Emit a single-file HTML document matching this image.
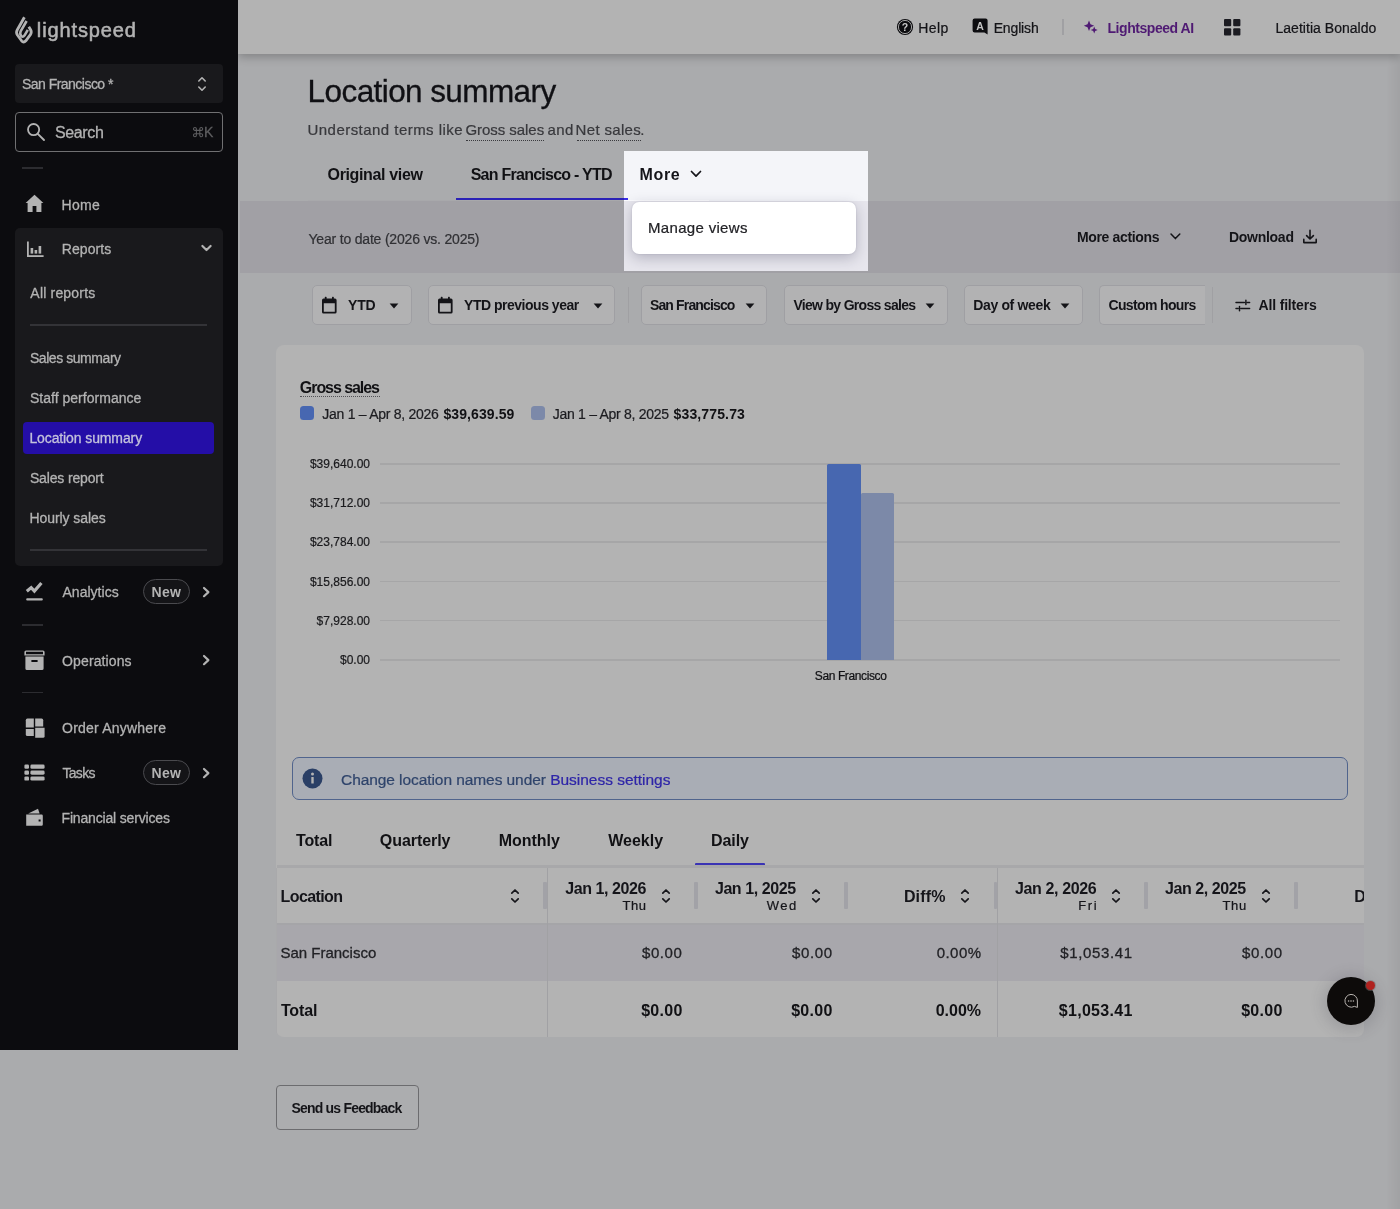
<!DOCTYPE html>
<html><head><meta charset="utf-8"><title>Location summary</title>
<style>
html,body{margin:0;padding:0}
body{width:1400px;height:1209px;background:#aaabad;position:relative;overflow:hidden;font-family:"Liberation Sans",sans-serif}
body div,body span,body svg{position:absolute;display:block}
span{white-space:pre}
svg{overflow:visible}
#w{left:0;top:0;width:1400px;height:1209px;will-change:transform}
</style></head><body><div id="w">
<div style="left:238px;top:0px;width:1162px;height:54px;background:#b3b3b3;box-shadow:0 3px 9px rgba(0,0,0,.24);z-index:2;clip-path:inset(0 0 -30px 0)"></div>
<div style="left:240px;top:201px;width:1160px;height:72px;background:#a1a0a5;"></div>
<div style="left:308px;top:200px;width:401px;height:1px;background:#a8a8ab;"></div>
<div style="left:456px;top:198px;width:172px;height:2px;background:#2b22b6;"></div>
<div style="left:624px;top:151px;width:244px;height:120px;background:#f4f5f9;overflow:hidden"><div style="left:0;top:50px;width:244px;height:70px;background:#e7e6ed"></div><div style="left:0;top:49px;width:85px;height:1px;background:#fcfcfe"></div><div style="left:0;top:47px;width:4px;height:2px;background:#3a2fe8"></div><div style="left:8px;top:51px;width:224px;height:52px;background:#fff;border-radius:7px;box-shadow:0 4px 14px rgba(30,30,60,.26),0 0 2px rgba(30,30,60,.14)"></div></div>
<svg style="left:690px;top:170px;" width="12" height="9" viewBox="0 0 12 9"><path d="M1.5 1.5 L6 6.2 L10.5 1.5" fill="none" stroke="#15151a" stroke-width="1.7" stroke-linecap="round" stroke-linejoin="round"/></svg>
<div style="left:0px;top:0px;width:238.3px;height:1050px;background:#0c0c0f;"></div>
<div style="left:14.6px;top:63.5px;width:208px;height:39.8px;background:#19191c;border-radius:4px"></div>
<div style="left:14.6px;top:111.5px;width:208px;height:40px;background:transparent;border-radius:4px;border:1px solid #707072;box-sizing:border-box"></div>
<div style="left:22px;top:167px;width:21px;height:2px;background:#2c2c30;"></div>
<div style="left:14.6px;top:228.4px;width:208px;height:337.6px;background:#19191c;border-radius:5px"></div>
<div style="left:30px;top:324px;width:177px;height:2px;background:#333337;"></div>
<div style="left:22.6px;top:421.5px;width:191.8px;height:32px;background:#240ea7;border-radius:4px"></div>
<div style="left:30px;top:549px;width:177px;height:2px;background:#333337;"></div>
<div style="left:22px;top:624px;width:21px;height:2px;background:#2c2c30;"></div>
<div style="left:22px;top:692px;width:21px;height:1px;background:#2c2c30;"></div>
<div style="left:143px;top:578.5px;width:47.4px;height:25.8px;background:transparent;border-radius:13px;border:1px solid #4a4a4e;box-sizing:border-box;background:#141417"></div>
<div style="left:143px;top:759.5px;width:47.4px;height:25.8px;background:transparent;border-radius:13px;border:1px solid #4a4a4e;box-sizing:border-box;background:#141417"></div>
<svg style="left:14px;top:15px;" width="20" height="30" viewBox="0 0 20 30"><g fill="none" stroke="#b3b3b3" stroke-linejoin="round" stroke-linecap="butt"><path stroke-width="2.8" d="M10.4 2.2 L3.2 15 Q1.8 17.6 3.4 20 L7.6 25.8 Q9.6 28.2 11.8 25.8 L16.4 19.6 Q18 17.2 16.6 14.8 L14.8 11.8"/><path stroke-width="2.6" d="M12.6 6 L6.6 16.4 Q5.6 18.6 7 20.6 Q8.8 22.8 10.4 20.6 L13.8 14.8"/></g></svg>
<svg style="left:197px;top:75px;" width="10" height="18" viewBox="0 0 10 18"><path d="M1.8 6 L5 2.8 L8.2 6 M1.8 12 L5 15.2 L8.2 12" fill="none" stroke="#b3b3b3" stroke-width="1.6" stroke-linecap="round" stroke-linejoin="round"/></svg>
<svg style="left:25px;top:121px;" width="22" height="22" viewBox="0 0 22 22"><circle cx="8.6" cy="8.6" r="5.6" fill="none" stroke="#b3b3b3" stroke-width="1.8"/><path d="M12.8 12.8 L19 19" stroke="#b3b3b3" stroke-width="1.9" stroke-linecap="round"/></svg>
<svg style="left:192.6px;top:126.8px;" width="10.2" height="10.2" viewBox="0 0 10.2 10.2"><path d="M3.4 6.8 V1.95 A1.45 1.45 0 1 0 1.95 3.4 H8.25 A1.45 1.45 0 1 0 6.8 1.95 V8.25 A1.45 1.45 0 1 0 8.25 6.8 H1.95 A1.45 1.45 0 1 0 3.4 8.25 Z" fill="none" stroke="#5e5e60" stroke-width="1.05"/></svg>
<svg style="left:25px;top:194px;" width="20" height="19" viewBox="0 0 20 19"><path d="M9.5 0.8 L0.6 9 L2.6 9 L2.6 17.9 L7.6 17.9 L7.6 12 L11.4 12 L11.4 17.9 L16.4 17.9 L16.4 9 L18.4 9 Z" fill="#b3b3b3"/></svg>
<svg style="left:26px;top:241px;" width="19" height="17" viewBox="0 0 19 17"><g fill="#b3b3b3"><rect x="1" y="0.5" width="1.8" height="15.5"/><rect x="1" y="14.2" width="16.6" height="1.8"/><rect x="4.6" y="7" width="2.6" height="5.6"/><rect x="8.6" y="9" width="2.6" height="3.6"/><rect x="12.6" y="5" width="2.6" height="7.6"/></g></svg>
<svg style="left:200px;top:243px;" width="13" height="11" viewBox="0 0 13 11"><path d="M2.4 3 L6.5 7 L10.6 3" fill="none" stroke="#b3b3b3" stroke-width="2.2" stroke-linecap="round" stroke-linejoin="round"/></svg>
<svg style="left:25px;top:581px;" width="20" height="21" viewBox="0 0 20 21"><path d="M1.8 10.2 L6.2 6.6 L9.4 10 L16.4 2" fill="none" stroke="#b3b3b3" stroke-width="3.2" stroke-linejoin="miter"/><rect x="1.2" y="17.2" width="16.6" height="2.2" rx="1" fill="#b3b3b3"/></svg>
<svg style="left:201px;top:584.5px;" width="11" height="14" viewBox="0 0 11 14"><path d="M3 3 L7.4 7.1 L3 11.2" fill="none" stroke="#b3b3b3" stroke-width="2.2" stroke-linecap="round" stroke-linejoin="round"/></svg>
<svg style="left:201px;top:653.2px;" width="11" height="14" viewBox="0 0 11 14"><path d="M3 3 L7.4 7.1 L3 11.2" fill="none" stroke="#b3b3b3" stroke-width="2.2" stroke-linecap="round" stroke-linejoin="round"/></svg>
<svg style="left:201px;top:765.6px;" width="11" height="14" viewBox="0 0 11 14"><path d="M3 3 L7.4 7.1 L3 11.2" fill="none" stroke="#b3b3b3" stroke-width="2.2" stroke-linecap="round" stroke-linejoin="round"/></svg>
<svg style="left:24px;top:650px;" width="21" height="21" viewBox="0 0 21 21"><g fill="#b3b3b3"><path d="M2 0.4 H19 Q20.6 0.4 20.6 2 V5.6 H0.4 V2 Q0.4 0.4 2 0.4 Z M2 1.8 V4.2 H19 V1.8 Z" fill-rule="evenodd"/><path d="M1.4 6.4 H19.6 V18.4 Q19.6 20 18 20 H3 Q1.4 20 1.4 18.4 Z M7.4 10 V12 H13.6 V10 Z" fill-rule="evenodd"/></g></svg>
<svg style="left:25px;top:718px;" width="21" height="21" viewBox="0 0 21 21"><g fill="#b3b3b3"><path d="M2.4 0.6 H8.8 V9.6 H0.8 V2.2 Q0.8 0.6 2.4 0.6Z"/><path d="M10.2 0.6 H16.6 Q18.2 0.6 18.2 2.2 V8.4 H10.2Z"/><path d="M0.8 11 H8.8 V18 H2.4 Q0.8 18 0.8 16.4Z"/><path d="M10.2 9.8 H19.6 V18.2 Q19.6 19.8 18 19.8 H10.2Z"/></g></svg>
<svg style="left:24px;top:764px;" width="21" height="18" viewBox="0 0 21 18"><g fill="#b3b3b3"><rect x="0.4" y="0.6" width="4.6" height="4.2" rx="1.2"/><rect x="6.4" y="0.6" width="14.2" height="4.2" rx="1.4"/><rect x="0.4" y="6.5" width="4.6" height="4.2" rx="1.2"/><rect x="6.4" y="6.5" width="14.2" height="4.2" rx="1.4"/><rect x="0.4" y="12.4" width="4.6" height="4.2" rx="1.2"/><rect x="6.4" y="12.4" width="14.2" height="4.2" rx="1.4"/></g></svg>
<svg style="left:25px;top:808px;" width="19" height="19" viewBox="0 0 19 19"><g fill="#b3b3b3"><path d="M3.2 5.4 L13 0.8 L14.6 5.4 Z"/><path d="M1.2 6.6 H16.6 Q17.8 6.6 17.8 7.8 V16.6 Q17.8 17.8 16.6 17.8 H1.2 Z M13.6 11.4 V13.4 H15.6 V11.4 Z" fill-rule="evenodd"/></g></svg>
<svg style="left:896px;top:18px;z-index:3" width="18" height="18" viewBox="0 0 18 18"><circle cx="9" cy="9" r="8.1" fill="#0d0d10"/><circle cx="9" cy="9" r="6.6" fill="none" stroke="#b3b3b3" stroke-width="0.9"/><text x="9" y="12.9" text-anchor="middle" font-family="Liberation Sans" font-weight="700" font-size="10.5" fill="#c9c9c9">?</text></svg>
<svg style="left:972px;top:18px;z-index:3" width="17" height="18" viewBox="0 0 17 18"><path d="M2.6 0.6 H13.6 Q15.6 0.6 15.6 2.6 V16.6 L12.4 14.4 H2.6 Q0.6 14.4 0.6 12.4 V2.6 Q0.6 0.6 2.6 0.6Z" fill="#0d0d10"/><text x="8.1" y="11.6" text-anchor="middle" font-family="Liberation Sans" font-weight="700" font-size="10.5" fill="#c4c4c4">A</text></svg>
<div style="left:1062px;top:19px;width:2px;height:16px;background:#a0a0a3;z-index:3"></div>
<svg style="left:1084px;top:20px;z-index:3" width="14" height="14" viewBox="0 0 14 14"><g fill="#4f1a73"><path d="M5 0.6 L6.5 4.3 L10.2 5.8 L6.5 7.3 L5 11 L3.5 7.3 L-0.2 5.8 L3.5 4.3Z"/><path d="M10.2 6.6 L11.2 9.1 L13.7 10.1 L11.2 11.1 L10.2 13.6 L9.2 11.1 L6.7 10.1 L9.2 9.1Z"/></g></svg>
<svg style="left:1224px;top:19px;z-index:3" width="17" height="17" viewBox="0 0 17 17"><g fill="#1b1b21"><rect x="0" y="0" width="7.2" height="7.2" rx="1"/><rect x="9.2" y="0" width="7.2" height="7.2" rx="1"/><rect x="0" y="9.2" width="7.2" height="7.2" rx="1"/><rect x="9.2" y="9.2" width="7.2" height="7.2" rx="1"/></g></svg>
<div style="left:466px;top:140px;width:78px;height:0px;background:transparent;border-top:1px dotted #3a3a3e"></div>
<div style="left:577px;top:140px;width:64px;height:0px;background:transparent;border-top:1px dotted #3a3a3e"></div>
<svg style="left:1169px;top:232px;" width="13" height="10" viewBox="0 0 13 10"><path d="M2 2 L6.4 6.6 L10.8 2" fill="none" stroke="#141418" stroke-width="1.5" stroke-linecap="round" stroke-linejoin="round"/></svg>
<svg style="left:1302px;top:229px;" width="16" height="16" viewBox="0 0 16 16"><g fill="none" stroke="#141418" stroke-width="1.6" stroke-linecap="round" stroke-linejoin="round"><path d="M8 1.4 V9.6 M4.6 6.6 L8 10 L11.4 6.6"/><path d="M1.8 10.4 V13.6 H14.2 V10.4"/></g></svg>
<div style="left:312px;top:285px;width:100px;height:40px;background:#b2b2b3;border:1px solid #9f9fa3;box-sizing:border-box;border-radius:5px;"></div>
<div style="left:428px;top:285px;width:187px;height:40px;background:#b2b2b3;border:1px solid #9f9fa3;box-sizing:border-box;border-radius:5px;"></div>
<div style="left:641px;top:285px;width:126px;height:40px;background:#b2b2b3;border:1px solid #9f9fa3;box-sizing:border-box;border-radius:5px;"></div>
<div style="left:784px;top:285px;width:164px;height:40px;background:#b2b2b3;border:1px solid #9f9fa3;box-sizing:border-box;border-radius:5px;"></div>
<div style="left:964px;top:285px;width:119px;height:40px;background:#b2b2b3;border:1px solid #9f9fa3;box-sizing:border-box;border-radius:5px;"></div>
<div style="left:1099px;top:285px;width:105.5px;height:40px;background:#b2b2b3;border:1px solid #9f9fa3;border-right:none;box-sizing:border-box;border-radius:5px 0 0 5px;"></div>
<div style="left:627.5px;top:287px;width:1px;height:36px;background:#a0a0a3;"></div>
<div style="left:1212px;top:287px;width:1px;height:36px;background:#a0a0a3;"></div>
<svg style="left:321px;top:295.6px;" width="17" height="19" viewBox="0 0 17 19"><g fill="#141418"><path d="M2.6 2.6 H14 Q15.6 2.6 15.6 4.2 V16 Q15.6 17.6 14 17.6 H2.6 Q1 17.6 1 16 V4.2 Q1 2.6 2.6 2.6Z M2.8 7.2 V15.8 H13.8 V7.2Z" fill-rule="evenodd"/><rect x="3.8" y="0.8" width="1.8" height="3.4" rx=".6"/><rect x="11" y="0.8" width="1.8" height="3.4" rx=".6"/></g></svg>
<svg style="left:437.2px;top:295.6px;" width="17" height="19" viewBox="0 0 17 19"><g fill="#141418"><path d="M2.6 2.6 H14 Q15.6 2.6 15.6 4.2 V16 Q15.6 17.6 14 17.6 H2.6 Q1 17.6 1 16 V4.2 Q1 2.6 2.6 2.6Z M2.8 7.2 V15.8 H13.8 V7.2Z" fill-rule="evenodd"/><rect x="3.8" y="0.8" width="1.8" height="3.4" rx=".6"/><rect x="11" y="0.8" width="1.8" height="3.4" rx=".6"/></g></svg>
<svg style="left:389.2px;top:302.5px;" width="10" height="6" viewBox="0 0 10 6"><path d="M0.6 0.6 H9.4 L5 5.4Z" fill="#141418"/></svg>
<svg style="left:592.6px;top:302.5px;" width="10" height="6" viewBox="0 0 10 6"><path d="M0.6 0.6 H9.4 L5 5.4Z" fill="#141418"/></svg>
<svg style="left:744.8px;top:302.5px;" width="10" height="6" viewBox="0 0 10 6"><path d="M0.6 0.6 H9.4 L5 5.4Z" fill="#141418"/></svg>
<svg style="left:925.2px;top:302.5px;" width="10" height="6" viewBox="0 0 10 6"><path d="M0.6 0.6 H9.4 L5 5.4Z" fill="#141418"/></svg>
<svg style="left:1060.2px;top:302.5px;" width="10" height="6" viewBox="0 0 10 6"><path d="M0.6 0.6 H9.4 L5 5.4Z" fill="#141418"/></svg>
<svg style="left:1235px;top:299px;" width="16" height="13" viewBox="0 0 16 13"><g stroke="#141418" stroke-width="1.5" fill="none" stroke-linecap="round"><path d="M1 3.4 H9.4 M12.4 3.4 H14.6 M10.9 1.2 V5.6"/><path d="M1 9.6 H3 M6 9.6 H14.6 M4.5 7.4 V11.8"/></g></svg>
<div style="left:276px;top:345px;width:1088px;height:692px;background:#b3b3b3;border-radius:8px"></div>
<div style="left:300px;top:396px;width:80px;height:0px;background:transparent;border-top:1px dotted #505055"></div>
<div style="left:300px;top:406px;width:14px;height:14px;background:#4767b1;border-radius:3.5px"></div>
<div style="left:530.5px;top:406px;width:14px;height:14px;background:#7c89a9;border-radius:3.5px"></div>
<div style="left:380px;top:463.0px;width:960px;height:1.6px;background:#a6a6a7;"></div>
<span style="left:290px;width:80px;text-align:right;top:458.0px;font-size:12px;line-height:12px;color:#1a1a1d;-webkit-text-stroke:0.2px #1a1a1d">$39,640.00</span>
<div style="left:380px;top:502.2px;width:960px;height:1.6px;background:#a6a6a7;"></div>
<span style="left:290px;width:80px;text-align:right;top:497.2px;font-size:12px;line-height:12px;color:#1a1a1d;-webkit-text-stroke:0.2px #1a1a1d">$31,712.00</span>
<div style="left:380px;top:541.4px;width:960px;height:1.6px;background:#a6a6a7;"></div>
<span style="left:290px;width:80px;text-align:right;top:536.4px;font-size:12px;line-height:12px;color:#1a1a1d;-webkit-text-stroke:0.2px #1a1a1d">$23,784.00</span>
<div style="left:380px;top:580.6px;width:960px;height:1.6px;background:#a6a6a7;"></div>
<span style="left:290px;width:80px;text-align:right;top:575.6px;font-size:12px;line-height:12px;color:#1a1a1d;-webkit-text-stroke:0.2px #1a1a1d">$15,856.00</span>
<div style="left:380px;top:619.8px;width:960px;height:1.6px;background:#a6a6a7;"></div>
<span style="left:290px;width:80px;text-align:right;top:614.8px;font-size:12px;line-height:12px;color:#1a1a1d;-webkit-text-stroke:0.2px #1a1a1d">$7,928.00</span>
<div style="left:380px;top:659.0px;width:960px;height:1.6px;background:#a6a6a7;"></div>
<span style="left:290px;width:80px;text-align:right;top:654.0px;font-size:12px;line-height:12px;color:#1a1a1d;-webkit-text-stroke:0.2px #1a1a1d">$0.00</span>
<div style="left:827px;top:464px;width:33.5px;height:195.5px;background:#4767b0;border-radius:1.5px 1.5px 0 0"></div>
<div style="left:860.5px;top:493px;width:33.5px;height:166.5px;background:#7c89a8;border-radius:1.5px 1.5px 0 0"></div>
<div style="left:292px;top:757px;width:1056px;height:42.6px;background:#a9adb5;border:1px solid #50648d;box-sizing:border-box;border-radius:7px"></div>
<svg style="left:302.2px;top:767.8px;" width="21" height="21" viewBox="0 0 21 21"><circle cx="10.5" cy="10.5" r="10" fill="#2a3f66"/><rect x="9.3" y="9" width="2.4" height="6.6" rx=".4" fill="#b3b3b3"/><circle cx="10.5" cy="5.9" r="1.5" fill="#b3b3b3"/></svg>
<div style="left:695.4px;top:863px;width:69.4px;height:2.6px;background:#3a33b4;border-radius:1px"></div>
<div style="left:277px;top:865.4px;width:1087px;height:2.2px;background:#a8a8aa;"></div>
<div style="left:277px;top:923px;width:1087px;height:2.4px;background:#a5a5a8;"></div>
<div style="left:277px;top:925px;width:1087px;height:56px;background:#a8a7ac;"></div>
<div style="left:276px;top:868px;width:1px;height:165px;background:#a9a9ab;"></div>
<div style="left:547px;top:868px;width:1px;height:169px;background:#a1a1a4;"></div>
<div style="left:997px;top:868px;width:1px;height:169px;background:#a1a1a4;"></div>
<div style="left:543.3px;top:881.8px;width:3.5px;height:27px;background:#a2a2a7;border-radius:1px"></div>
<div style="left:694px;top:881.8px;width:3.5px;height:27px;background:#a2a2a7;border-radius:1px"></div>
<div style="left:844.3px;top:881.8px;width:3.5px;height:27px;background:#a2a2a7;border-radius:1px"></div>
<div style="left:993.6px;top:881.8px;width:3.5px;height:27px;background:#a2a2a7;border-radius:1px"></div>
<div style="left:1144.3px;top:881.8px;width:3.5px;height:27px;background:#a2a2a7;border-radius:1px"></div>
<div style="left:1294.3px;top:881.8px;width:3.5px;height:27px;background:#a2a2a7;border-radius:1px"></div>
<svg style="left:510px;top:886.5px;" width="10" height="18" viewBox="0 0 10 18"><path d="M1.8 6.2 L5 3 L8.2 6.2 M1.8 11.8 L5 15 L8.2 11.8" fill="none" stroke="#15151a" stroke-width="1.7" stroke-linecap="round" stroke-linejoin="round"/></svg>
<svg style="left:661px;top:886.5px;" width="10" height="18" viewBox="0 0 10 18"><path d="M1.8 6.2 L5 3 L8.2 6.2 M1.8 11.8 L5 15 L8.2 11.8" fill="none" stroke="#15151a" stroke-width="1.7" stroke-linecap="round" stroke-linejoin="round"/></svg>
<svg style="left:810.7px;top:886.5px;" width="10" height="18" viewBox="0 0 10 18"><path d="M1.8 6.2 L5 3 L8.2 6.2 M1.8 11.8 L5 15 L8.2 11.8" fill="none" stroke="#15151a" stroke-width="1.7" stroke-linecap="round" stroke-linejoin="round"/></svg>
<svg style="left:959.5px;top:886.5px;" width="10" height="18" viewBox="0 0 10 18"><path d="M1.8 6.2 L5 3 L8.2 6.2 M1.8 11.8 L5 15 L8.2 11.8" fill="none" stroke="#15151a" stroke-width="1.7" stroke-linecap="round" stroke-linejoin="round"/></svg>
<svg style="left:1110.7px;top:886.5px;" width="10" height="18" viewBox="0 0 10 18"><path d="M1.8 6.2 L5 3 L8.2 6.2 M1.8 11.8 L5 15 L8.2 11.8" fill="none" stroke="#15151a" stroke-width="1.7" stroke-linecap="round" stroke-linejoin="round"/></svg>
<svg style="left:1261px;top:886.5px;" width="10" height="18" viewBox="0 0 10 18"><path d="M1.8 6.2 L5 3 L8.2 6.2 M1.8 11.8 L5 15 L8.2 11.8" fill="none" stroke="#15151a" stroke-width="1.7" stroke-linecap="round" stroke-linejoin="round"/></svg>
<div style="left:276px;top:1085px;width:142.5px;height:45px;background:#acadaf;border:1px solid #6c6c6f;box-sizing:border-box;border-radius:4px"></div>
<div style="left:1327px;top:977px;width:48px;height:48px;border-radius:50%;background:#0d0b0a;box-shadow:0 2px 14px 4px rgba(60,60,70,.18)"></div>
<svg style="left:1343px;top:993px;" width="16" height="16" viewBox="0 0 16 16"><path d="M8 1.4 A6.4 6.4 0 1 0 11.4 13.4 L14.4 14.4 L14.4 8 A6.4 6.4 0 0 0 8 1.4Z" fill="none" stroke="#b8b4b0" stroke-width="1"/><g fill="#b8b4b0"><circle cx="5.6" cy="8" r=".8"/><circle cx="8" cy="8" r=".8"/><circle cx="10.4" cy="8" r=".8"/></g></svg>
<div style="left:1366.4px;top:981.3px;width:9px;height:9px;background:#b0221f;border-radius:50%;box-shadow:0 0 0 1px rgba(120,110,110,.5)"></div>
<div style="left:1386px;top:54px;width:14px;height:1155px;background:linear-gradient(90deg,rgba(0,0,0,0),rgba(0,0,0,.055));"></div>
<span style="left:36.87px;top:20px;font-size:20px;line-height:20px;font-weight:400;letter-spacing:0.869px;color:#b3b3b3;-webkit-text-stroke:0.55px #b3b3b3">lightspeed</span>
<span style="left:21.98px;top:77px;font-size:14px;line-height:14px;font-weight:400;letter-spacing:-0.525px;color:#b3b3b3;-webkit-text-stroke:0.3px #b3b3b3">San Francisco *</span>
<span style="left:54.96px;top:125px;font-size:16px;line-height:16px;font-weight:400;letter-spacing:-0.363px;color:#b3b3b3;-webkit-text-stroke:0.3px #b3b3b3">Search</span>
<span style="left:203.92px;top:125px;font-size:14px;line-height:14px;font-weight:400;letter-spacing:0px;color:#5e5e60;-webkit-text-stroke:0.3px #5e5e60">K</span>
<span style="left:61.51px;top:198px;font-size:14px;line-height:14px;font-weight:400;letter-spacing:0.273px;color:#b3b3b3;-webkit-text-stroke:0.3px #b3b3b3">Home</span>
<span style="left:61.81px;top:242px;font-size:14px;line-height:14px;font-weight:400;letter-spacing:0.081px;color:#b3b3b3;-webkit-text-stroke:0.3px #b3b3b3">Reports</span>
<span style="left:30.36px;top:286px;font-size:14px;line-height:14px;font-weight:400;letter-spacing:0.183px;color:#b3b3b3;-webkit-text-stroke:0.3px #b3b3b3">All reports</span>
<span style="left:29.88px;top:351px;font-size:14px;line-height:14px;font-weight:400;letter-spacing:-0.436px;color:#b3b3b3;-webkit-text-stroke:0.3px #b3b3b3">Sales summary</span>
<span style="left:29.88px;top:391px;font-size:14px;line-height:14px;font-weight:400;letter-spacing:0.026px;color:#b3b3b3;-webkit-text-stroke:0.3px #b3b3b3">Staff performance</span>
<span style="left:29.41px;top:431px;font-size:14px;line-height:14px;font-weight:400;letter-spacing:-0.11px;color:#c4c2dc;-webkit-text-stroke:0.3px #c4c2dc">Location summary</span>
<span style="left:29.88px;top:471px;font-size:14px;line-height:14px;font-weight:400;letter-spacing:-0.151px;color:#b3b3b3;-webkit-text-stroke:0.3px #b3b3b3">Sales report</span>
<span style="left:29.41px;top:511px;font-size:14px;line-height:14px;font-weight:400;letter-spacing:-0.056px;color:#b3b3b3;-webkit-text-stroke:0.3px #b3b3b3">Hourly sales</span>
<span style="left:62.46px;top:585px;font-size:14px;line-height:14px;font-weight:400;letter-spacing:0.029px;color:#b3b3b3;-webkit-text-stroke:0.3px #b3b3b3">Analytics</span>
<span style="left:151.60px;top:585px;font-size:14px;line-height:14px;font-weight:700;letter-spacing:0.262px;color:#b3b3b3">New</span>
<span style="left:62.09px;top:654px;font-size:14px;line-height:14px;font-weight:400;letter-spacing:0.117px;color:#b3b3b3;-webkit-text-stroke:0.3px #b3b3b3">Operations</span>
<span style="left:62.09px;top:721px;font-size:14px;line-height:14px;font-weight:400;letter-spacing:0.208px;color:#b3b3b3;-webkit-text-stroke:0.3px #b3b3b3">Order Anywhere</span>
<span style="left:62.41px;top:766px;font-size:14px;line-height:14px;font-weight:400;letter-spacing:-0.682px;color:#b3b3b3;-webkit-text-stroke:0.3px #b3b3b3">Tasks</span>
<span style="left:151.60px;top:766px;font-size:14px;line-height:14px;font-weight:700;letter-spacing:0.262px;color:#b3b3b3">New</span>
<span style="left:61.51px;top:811px;font-size:14px;line-height:14px;font-weight:400;letter-spacing:-0.169px;color:#b3b3b3;-webkit-text-stroke:0.3px #b3b3b3">Financial services</span>
<span style="left:918.36px;top:21px;font-size:14px;line-height:14px;font-weight:400;letter-spacing:0.392px;color:#141418;z-index:3;-webkit-text-stroke:0.22px #141418">Help</span>
<span style="left:993.66px;top:21px;font-size:14px;line-height:14px;font-weight:400;letter-spacing:-0.147px;color:#141418;z-index:3;-webkit-text-stroke:0.22px #141418">English</span>
<span style="left:1107.50px;top:21px;font-size:14px;line-height:14px;font-weight:700;letter-spacing:-0.45px;color:#4f1a73;z-index:3">Lightspeed AI</span>
<span style="left:1275.46px;top:21px;font-size:14px;line-height:14px;font-weight:400;letter-spacing:0.031px;color:#141418;z-index:3;-webkit-text-stroke:0.22px #141418">Laetitia Bonaldo</span>
<span style="left:307.62px;top:76px;font-size:31.5px;line-height:31.5px;font-weight:400;letter-spacing:-0.586px;color:#101014;-webkit-text-stroke:0.3px #101014">Location summary</span>
<span style="left:307.52px;top:122px;font-size:15px;line-height:15px;font-weight:400;letter-spacing:0.458px;color:#38383c;-webkit-text-stroke:0.22px #38383c">Understand terms like</span>
<span style="left:465.39px;top:122px;font-size:15px;line-height:15px;font-weight:400;letter-spacing:-0.04px;color:#38383c;-webkit-text-stroke:0.22px #38383c">Gross sales</span>
<span style="left:547.45px;top:122px;font-size:15px;line-height:15px;font-weight:400;letter-spacing:0.389px;color:#38383c;-webkit-text-stroke:0.22px #38383c">and</span>
<span style="left:575.52px;top:122px;font-size:15px;line-height:15px;font-weight:400;letter-spacing:0.346px;color:#38383c;-webkit-text-stroke:0.22px #38383c">Net sales</span>
<span style="left:640.34px;top:122px;font-size:15px;line-height:15px;font-weight:400;letter-spacing:0px;color:#38383c;-webkit-text-stroke:0.22px #38383c">.</span>
<span style="left:327.57px;top:167px;font-size:16px;line-height:16px;font-weight:700;letter-spacing:-0.356px;color:#111114">Original view</span>
<span style="left:470.65px;top:167px;font-size:16px;line-height:16px;font-weight:700;letter-spacing:-0.741px;color:#111114">San Francisco - YTD</span>
<span style="left:639.61px;top:167px;font-size:16px;line-height:16px;font-weight:700;letter-spacing:0.595px;color:#15151a">More</span>
<span style="left:648.00px;top:220px;font-size:15px;line-height:15px;font-weight:400;letter-spacing:0.324px;color:#222226;-webkit-text-stroke:0.22px #222226">Manage views</span>
<span style="left:308.48px;top:232px;font-size:14px;line-height:14px;font-weight:400;letter-spacing:-0.189px;color:#303034;-webkit-text-stroke:0.22px #303034">Year to date (2026 vs. 2025)</span>
<span style="left:1076.90px;top:230px;font-size:14px;line-height:14px;font-weight:700;letter-spacing:-0.333px;color:#141418">More actions</span>
<span style="left:1228.90px;top:230px;font-size:14px;line-height:14px;font-weight:700;letter-spacing:-0.261px;color:#141418">Download</span>
<span style="left:347.97px;top:298px;font-size:14px;line-height:14px;font-weight:700;letter-spacing:-0.163px;color:#141418">YTD</span>
<span style="left:464.07px;top:298px;font-size:14px;line-height:14px;font-weight:700;letter-spacing:-0.489px;color:#141418">YTD previous year</span>
<span style="left:649.95px;top:298px;font-size:14px;line-height:14px;font-weight:700;letter-spacing:-0.852px;color:#141418">San Francisco</span>
<span style="left:793.41px;top:298px;font-size:14px;line-height:14px;font-weight:700;letter-spacing:-0.691px;color:#141418">View by Gross sales</span>
<span style="left:973.20px;top:298px;font-size:14px;line-height:14px;font-weight:700;letter-spacing:-0.344px;color:#141418">Day of week</span>
<span style="left:1108.45px;top:298px;font-size:14px;line-height:14px;font-weight:700;letter-spacing:-0.63px;color:#141418">Custom hours</span>
<span style="left:1258.57px;top:298px;font-size:14px;line-height:14px;font-weight:700;letter-spacing:-0.175px;color:#141418">All filters</span>
<span style="left:299.87px;top:380px;font-size:16px;line-height:16px;font-weight:700;letter-spacing:-1.067px;color:#111114">Gross sales</span>
<span style="left:322.30px;top:407px;font-size:14px;line-height:14px;font-weight:400;letter-spacing:-0.275px;color:#1c1c20;-webkit-text-stroke:0.22px #1c1c20">Jan 1 – Apr 8, 2026</span>
<span style="left:443.40px;top:407px;font-size:14px;line-height:14px;font-weight:700;letter-spacing:0.093px;color:#111114">$39,639.59</span>
<span style="left:552.80px;top:407px;font-size:14px;line-height:14px;font-weight:400;letter-spacing:-0.284px;color:#1c1c20;-webkit-text-stroke:0.22px #1c1c20">Jan 1 – Apr 8, 2025</span>
<span style="left:673.60px;top:407px;font-size:14px;line-height:14px;font-weight:700;letter-spacing:0.131px;color:#111114">$33,775.73</span>
<span style="left:814.77px;top:670px;font-size:12px;line-height:12px;font-weight:400;letter-spacing:-0.385px;color:#111114;-webkit-text-stroke:0.22px #111114">San Francisco</span>
<span style="left:341.05px;top:772px;font-size:15.5px;line-height:15.5px;font-weight:400;letter-spacing:-0.076px;color:#2f446b;-webkit-text-stroke:0.22px #2f446b">Change location names under</span>
<span style="left:550.18px;top:772px;font-size:15.5px;line-height:15.5px;font-weight:400;letter-spacing:-0.023px;color:#2e25a8;-webkit-text-stroke:0.22px #2e25a8">Business settings</span>
<span style="left:296.09px;top:833px;font-size:16px;line-height:16px;font-weight:700;letter-spacing:-0.195px;color:#111114">Total</span>
<span style="left:379.87px;top:833px;font-size:16px;line-height:16px;font-weight:700;letter-spacing:-0.067px;color:#111114">Quarterly</span>
<span style="left:498.71px;top:833px;font-size:16px;line-height:16px;font-weight:700;letter-spacing:-0.023px;color:#111114">Monthly</span>
<span style="left:608.14px;top:833px;font-size:16px;line-height:16px;font-weight:700;letter-spacing:0.029px;color:#111114">Weekly</span>
<span style="left:711.01px;top:833px;font-size:16px;line-height:16px;font-weight:700;letter-spacing:-0.069px;color:#111114">Daily</span>
<span style="left:280.61px;top:889px;font-size:16px;line-height:16px;font-weight:700;letter-spacing:-0.624px;color:#15151a">Location</span>
<span style="left:565.21px;top:881px;font-size:16px;line-height:16px;font-weight:700;letter-spacing:-0.424px;color:#15151a">Jan 1, 2026</span>
<span style="left:622.40px;top:899px;font-size:13px;line-height:13px;font-weight:400;letter-spacing:0.623px;color:#15151a;-webkit-text-stroke:0.22px #15151a">Thu</span>
<span style="left:714.91px;top:881px;font-size:16px;line-height:16px;font-weight:700;letter-spacing:-0.426px;color:#15151a">Jan 1, 2025</span>
<span style="left:766.64px;top:899px;font-size:13px;line-height:13px;font-weight:400;letter-spacing:1.504px;color:#15151a;-webkit-text-stroke:0.22px #15151a">Wed</span>
<span style="left:903.91px;top:889px;font-size:16px;line-height:16px;font-weight:700;letter-spacing:0.143px;color:#15151a">Diff%</span>
<span style="left:1014.91px;top:881px;font-size:16px;line-height:16px;font-weight:700;letter-spacing:-0.364px;color:#15151a">Jan 2, 2026</span>
<span style="left:1078.23px;top:899px;font-size:13px;line-height:13px;font-weight:400;letter-spacing:1.642px;color:#15151a;-webkit-text-stroke:0.22px #15151a">Fri</span>
<span style="left:1164.91px;top:881px;font-size:16px;line-height:16px;font-weight:700;letter-spacing:-0.406px;color:#15151a">Jan 2, 2025</span>
<span style="left:1222.40px;top:899px;font-size:13px;line-height:13px;font-weight:400;letter-spacing:0.673px;color:#15151a;-webkit-text-stroke:0.22px #15151a">Thu</span>
<span style="left:1354.31px;top:889px;font-size:16px;line-height:16px;font-weight:700;letter-spacing:0px;color:#15151a;width:9.7px;overflow:hidden">D</span>
<span style="left:280.40px;top:945px;font-size:15px;line-height:15px;font-weight:400;letter-spacing:-0.0px;color:#222226;-webkit-text-stroke:0.3px #222226">San Francisco</span>
<span style="left:642.04px;top:945px;font-size:15px;line-height:15px;font-weight:400;letter-spacing:0.567px;color:#222226;-webkit-text-stroke:0.3px #222226">$0.00</span>
<span style="left:792.04px;top:945px;font-size:15px;line-height:15px;font-weight:400;letter-spacing:0.617px;color:#222226;-webkit-text-stroke:0.3px #222226">$0.00</span>
<span style="left:936.64px;top:945px;font-size:15px;line-height:15px;font-weight:400;letter-spacing:0.474px;color:#222226;-webkit-text-stroke:0.3px #222226">0.00%</span>
<span style="left:1060.14px;top:945px;font-size:15px;line-height:15px;font-weight:400;letter-spacing:0.666px;color:#222226;-webkit-text-stroke:0.3px #222226">$1,053.41</span>
<span style="left:1242.04px;top:945px;font-size:15px;line-height:15px;font-weight:400;letter-spacing:0.617px;color:#222226;-webkit-text-stroke:0.3px #222226">$0.00</span>
<span style="left:280.89px;top:1003px;font-size:16px;line-height:16px;font-weight:700;letter-spacing:-0.095px;color:#111114">Total</span>
<span style="left:641.14px;top:1003px;font-size:16px;line-height:16px;font-weight:700;letter-spacing:0.279px;color:#111114">$0.00</span>
<span style="left:791.14px;top:1003px;font-size:16px;line-height:16px;font-weight:700;letter-spacing:0.304px;color:#111114">$0.00</span>
<span style="left:935.73px;top:1003px;font-size:16px;line-height:16px;font-weight:700;letter-spacing:-0.008px;color:#111114">0.00%</span>
<span style="left:1058.84px;top:1003px;font-size:16px;line-height:16px;font-weight:700;letter-spacing:0.284px;color:#111114">$1,053.41</span>
<span style="left:1241.14px;top:1003px;font-size:16px;line-height:16px;font-weight:700;letter-spacing:0.279px;color:#111114">$0.00</span>
<span style="left:291.45px;top:1101px;font-size:14px;line-height:14px;font-weight:700;letter-spacing:-0.799px;color:#141418">Send us Feedback</span>
</div></body></html>
